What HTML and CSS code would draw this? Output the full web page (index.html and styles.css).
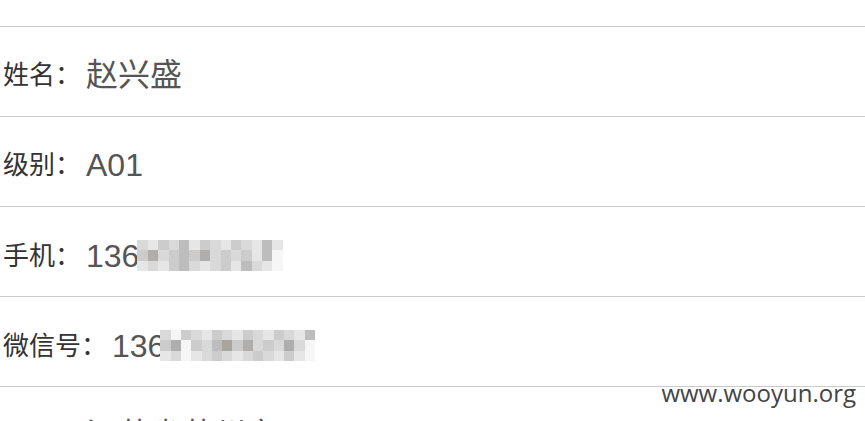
FILE: index.html
```html
<!DOCTYPE html>
<html lang="zh">
<head>
<meta charset="utf-8">
<link rel="stylesheet" href="styles.css">
</head>
<body>
<div class="page">
  <div class="list">
    <div class="row"><span class="label">姓名：</span><span class="value">赵兴盛</span></div>
    <div class="row"><span class="label">级别：</span><span class="value">A01</span></div>
    <div class="row"><span class="label">手机：</span><span class="value">136<span class="mosaic m-phone"><span class="grid">
      <i class="c2"></i><i class="c1"></i><i class="c3"></i><i class="c2"></i><i class="c4"></i><i class="c1"></i><i class="c3"></i><i class="c2"></i><i class="c1"></i><i class="c3"></i><i class="c2"></i><i class="c1"></i><i class="c4"></i><i class="c1"></i>
      <i class="c3"></i><i class="c5"></i><i class="c2"></i><i class="c3"></i><i class="c4"></i><i class="c3"></i><i class="c5"></i><i class="c2"></i><i class="c3"></i><i class="c2"></i><i class="c3"></i><i class="c1"></i><i class="c4"></i><i class="c0"></i>
      <i class="c1"></i><i class="c2"></i><i class="c1"></i><i class="c3"></i><i class="c4"></i><i class="c2"></i><i class="c1"></i><i class="c2"></i><i class="c3"></i><i class="c1"></i><i class="c4"></i><i class="c2"></i><i class="c1"></i><i class="c0"></i>
    </span></span></span></div>
    <div class="row"><span class="label">微信号：</span><span class="value">136<span class="mosaic m-wx"><span class="grid">
      <i class="c2"></i><i class="c0"></i><i class="c3"></i><i class="c2"></i><i class="c1"></i><i class="c3"></i><i class="c2"></i><i class="c1"></i><i class="c3"></i><i class="c2"></i><i class="c1"></i><i class="c3"></i><i class="c2"></i><i class="c1"></i><i class="c4"></i>
      <i class="c3"></i><i class="c5"></i><i class="c0"></i><i class="c3"></i><i class="c2"></i><i class="c4"></i><i class="c6"></i><i class="c3"></i><i class="c5"></i><i class="c2"></i><i class="c3"></i><i class="c2"></i><i class="c5"></i><i class="c2"></i><i class="c0"></i>
      <i class="c1"></i><i class="c2"></i><i class="c0"></i><i class="c1"></i><i class="c2"></i><i class="c3"></i><i class="c2"></i><i class="c1"></i><i class="c2"></i><i class="c3"></i><i class="c2"></i><i class="c1"></i><i class="c3"></i><i class="c1"></i><i class="c0"></i>
    </span></span></span></div>
    <div class="row"><span class="label">籍贯：</span><span class="value">江苏省苏州市</span></div>
  </div>
  <div class="watermark">www.wooyun.org</div>
</div>
</body>
</html>
```

FILE: styles.css
```css
html, body {
  margin: 0;
  padding: 0;
  background: #fff;
}
.page {
  position: relative;
  width: 865px;
  height: 421px;
  overflow: hidden;
}
.list {
  padding-top: 26px;
}
.row {
  border-top: 1px solid #cccccc;
  padding: 33px 0 0 3px;
  box-sizing: border-box;
  height: 90px;
  line-height: 30px;
  white-space: nowrap;
  font-family: "Liberation Sans", "Noto Sans CJK SC", sans-serif;
}
.label {
  font-size: 26px;
  color: #333;
  margin-right: 5px;
  vertical-align: 2px;
}
.value {
  font-size: 32px;
  color: #555;
}
.mosaic {
  display: inline-block;
  overflow: hidden;
  vertical-align: -4px;
  filter: blur(0.6px);
}
.grid {
  display: grid;
  grid-auto-rows: 10.3px;
}
.m-phone {
  margin-left: -2px;
}
.m-phone .grid {
  grid-template-columns: repeat(14, 10.4px);
}
.m-wx {
  margin-left: -5px;
}
.m-wx .grid {
  grid-template-columns: repeat(15, 10.3px);
}
.grid i { display: block; }
.c0 { background: #f6f6f6; }
.c1 { background: #e6e6e6; }
.c2 { background: #d9d9d9; }
.c3 { background: #cccccc; }
.c4 { background: #bdbdbd; }
.c5 { background: #b0aeac; }
.c6 { background: #a9a49c; }
.watermark {
  position: absolute;
  right: 9px;
  top: 376px;
  font-family: "Open Sans", sans-serif;
  font-size: 24px;
  color: #444;
}
```
